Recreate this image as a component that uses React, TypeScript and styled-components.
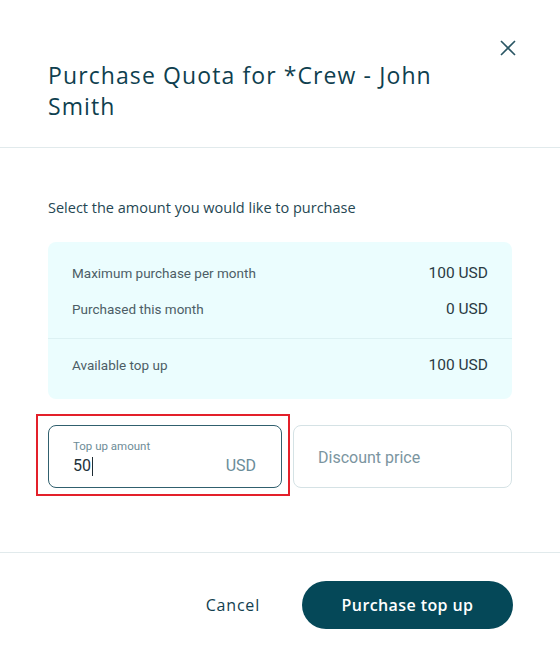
import React from 'react';
import styled, { createGlobalStyle } from 'styled-components';

const GlobalStyle = createGlobalStyle`
  html, body {
    margin: 0;
    padding: 0;
    background: #ffffff;
  }
  body {
    font-family: 'Open Sans', 'Liberation Sans', sans-serif;
  }
  * {
    box-sizing: border-box;
  }
`;

const Dialog = styled.div`
  width: 560px;
  height: 656px;
  background: #ffffff;
  display: flex;
  flex-direction: column;
`;

const Header = styled.div`
  display: flex;
  justify-content: space-between;
  align-items: flex-start;
  padding: 40px 44px 25px 48px;
  border-bottom: 1px solid #e1eaec;
`;

const Title = styled.h2`
  margin: 20px 0 0;
  width: 420px;
  font-family: 'Open Sans', 'Liberation Sans', sans-serif;
  font-size: 23px;
  font-weight: 400;
  line-height: 31px;
  letter-spacing: 1.1px;
  color: #0f3f4f;
`;

const CloseButton = styled.button`
  width: 16px;
  height: 16px;
  padding: 0;
  border: none;
  background: none;
  color: #2a5664;
  cursor: pointer;
  display: flex;
`;

const Body = styled.div`
  display: flex;
  flex-direction: column;
  padding: 50px 48px 64px;
  border-bottom: 1px solid #e1eaec;
`;

const Intro = styled.p`
  margin: 0 0 24px;
  font-family: 'Open Sans', 'Liberation Sans', sans-serif;
  font-size: 14.5px;
  line-height: 20px;
  color: #254753;
`;

const InfoBox = styled.div`
  display: flex;
  flex-direction: column;
  background: #ebfdfe;
  border-radius: 8px;
`;

const InfoSection = styled.div<{ $top?: boolean }>`
  display: flex;
  flex-direction: column;
  gap: 16px;
  padding: ${({ $top }) => ($top ? '21px 24px 19px' : '16px 24px 24px')};
  border-bottom: ${({ $top }) => ($top ? '1px solid #dcf1f3' : 'none')};
`;

const InfoRow = styled.div`
  display: flex;
  justify-content: space-between;
  align-items: center;
  height: 20px;
`;

const InfoLabel = styled.span`
  font-family: Roboto, 'Liberation Sans', sans-serif;
  font-size: 13.5px;
  color: #4d5d66;
`;

const InfoValue = styled.span`
  font-family: Roboto, 'Liberation Sans', sans-serif;
  font-size: 15.5px;
  color: #2a3a42;
`;

const InputRow = styled.div`
  display: flex;
  gap: 11px;
  margin-top: 26px;
`;

const Field = styled.div<{ $active?: boolean; $width: number }>`
  position: relative;
  width: ${({ $width }) => $width}px;
  height: 63px;
  border: 1px solid ${({ $active }) => ($active ? '#30606e' : '#d5e2e5')};
  border-radius: 8px;
  display: flex;
  align-items: ${({ $active }) => ($active ? 'flex-end' : 'center')};
  padding: ${({ $active }) => ($active ? '0 25px 11px 24px' : '2px 24px 0')};
`;

const Highlight = styled.div`
  position: absolute;
  top: -12px;
  left: -13px;
  right: -9px;
  bottom: -9px;
  border: 2px solid #e3202a;
  pointer-events: none;
`;

const FieldLabel = styled.span`
  position: absolute;
  top: 13px;
  left: 24px;
  font-family: Roboto, 'Liberation Sans', sans-serif;
  font-size: 11.5px;
  color: #6e8c97;
`;

const FieldValue = styled.span`
  flex: 1;
  display: flex;
  align-items: center;
  font-family: Roboto, 'Liberation Sans', sans-serif;
  font-size: 16px;
  line-height: 20px;
  color: #22313a;
`;

const Caret = styled.span`
  display: inline-block;
  width: 1px;
  height: 19px;
  margin-left: 1px;
  background: #1d2c33;
`;

const Suffix = styled.span`
  font-family: Roboto, 'Liberation Sans', sans-serif;
  font-size: 16px;
  line-height: 20px;
  color: #6a8c99;
`;

const Placeholder = styled.span`
  font-family: Roboto, 'Liberation Sans', sans-serif;
  font-size: 16px;
  color: #7b959f;
`;

const Footer = styled.div`
  display: flex;
  justify-content: flex-end;
  align-items: center;
  gap: 42px;
  padding: 28px 47px 27px 0;
`;

const TextButton = styled.button`
  border: none;
  background: none;
  padding: 0;
  font-family: 'Open Sans', 'Liberation Sans', sans-serif;
  font-size: 16px;
  font-weight: 500;
  letter-spacing: 0.8px;
  color: #12404f;
  cursor: pointer;
`;

const PrimaryButton = styled.button`
  width: 211px;
  height: 48px;
  border: none;
  border-radius: 24px;
  background: #054858;
  color: #ffffff;
  font-family: 'Open Sans', 'Liberation Sans', sans-serif;
  font-size: 16px;
  font-weight: 600;
  letter-spacing: 0.4px;
  cursor: pointer;
`;

const App: React.FC = () => {
  return (
    <>
      <GlobalStyle />
      <Dialog>
        <Header>
          <Title>Purchase Quota for *Crew - John Smith</Title>
          <CloseButton aria-label="Close">
            <svg width="16" height="16" viewBox="0 0 16 16" fill="none">
              <path d="M1 1L15 15M15 1L1 15" stroke="currentColor" strokeWidth="1.6" />
            </svg>
          </CloseButton>
        </Header>

        <Body>
          <Intro>Select the amount you would like to purchase</Intro>
          <InfoBox>
            <InfoSection $top>
              <InfoRow>
                <InfoLabel>Maximum purchase per month</InfoLabel>
                <InfoValue>100 USD</InfoValue>
              </InfoRow>
              <InfoRow>
                <InfoLabel>Purchased this month</InfoLabel>
                <InfoValue>0 USD</InfoValue>
              </InfoRow>
            </InfoSection>
            <InfoSection>
              <InfoRow>
                <InfoLabel>Available top up</InfoLabel>
                <InfoValue>100 USD</InfoValue>
              </InfoRow>
            </InfoSection>
          </InfoBox>

          <InputRow>
            <Field $active $width={234}>
              <Highlight />
              <FieldLabel>Top up amount</FieldLabel>
              <FieldValue>
                50
                <Caret />
              </FieldValue>
              <Suffix>USD</Suffix>
            </Field>
            <Field $width={219}>
              <Placeholder>Discount price</Placeholder>
            </Field>
          </InputRow>
        </Body>

        <Footer>
          <TextButton>Cancel</TextButton>
          <PrimaryButton>Purchase top up</PrimaryButton>
        </Footer>
      </Dialog>
    </>
  );
};

export default App;
